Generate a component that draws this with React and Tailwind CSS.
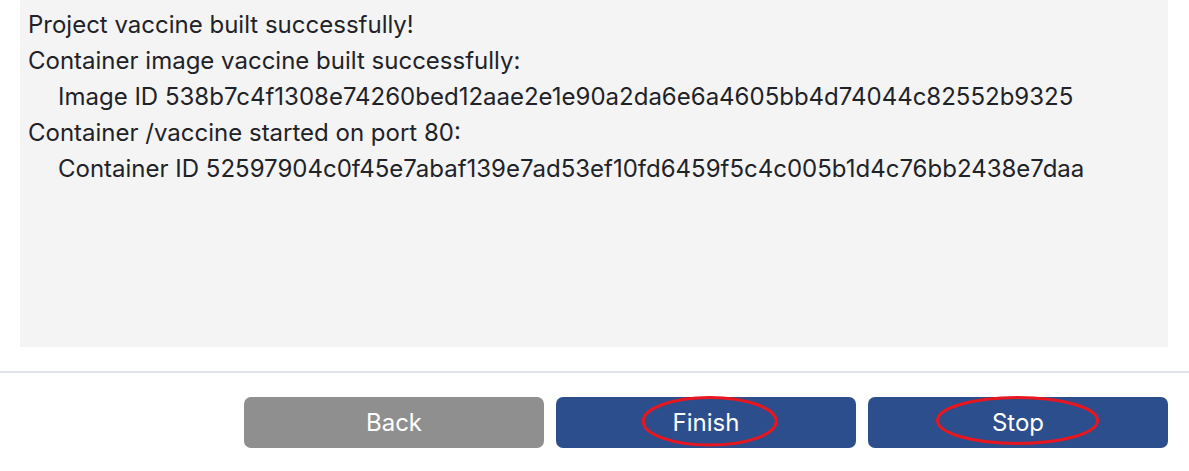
const lines = [
    { text: "Project vaccine built successfully!", indent: false },
    { text: "Container image vaccine built successfully:", indent: false },
    { text: "Image ID 538b7c4f1308e74260bed12aae2e1e90a2da6e6a4605bb4d74044c82552b9325", indent: true },
    { text: "Container /vaccine started on port 80:", indent: false },
    { text: "Container ID 52597904c0f45e7abaf139e7ad53ef10fd6459f5c4c005b1d4c76bb2438e7daa", indent: true },
];

const Ring = ({ cx, cy, rx, ry }) => (
    <svg className="absolute inset-0 w-full h-full overflow-visible pointer-events-none" viewBox="0 0 300 51">
        <ellipse cx={cx} cy={cy} rx={rx} ry={ry} fill="none" stroke="#e8161f" strokeWidth="3" />
    </svg>
);

const App = () => {
    return (
        <div className="w-full h-[471px] bg-white font-['Inter','Liberation_Sans',sans-serif]">
            <div className="ml-[20px] mr-[21px] h-[347px] bg-[#f4f4f4] pt-[7px] pl-[8px]">
                {lines.map((l, i) => (
                    <div key={i} className={`text-[24px] leading-[36px] text-[#1f2328] whitespace-nowrap ${l.indent ? "pl-[30px]" : ""}`}>
                        {l.text}
                    </div>
                ))}
            </div>

            <div className="mt-[24px] h-[2px] bg-[#dfe3e8]" />

            <div className="flex justify-end gap-3 pt-[24px] pr-[21px]">
                <button className="w-[300px] h-[51px] rounded-[7px] bg-[#8f8f8f] text-white text-[24px]">
                    Back
                </button>
                <button className="relative w-[300px] h-[51px] rounded-[7px] bg-[#2d4e8c] text-white text-[24px]">
                    Finish
                    <Ring cx={153.7} cy={24.3} rx={66.5} ry={23.8} />
                </button>
                <button className="relative w-[300px] h-[51px] rounded-[7px] bg-[#2d4e8c] text-white text-[24px]">
                    Stop
                    <Ring cx={149.5} cy={23.5} rx={80} ry={23} />
                </button>
            </div>
        </div>
    );
};

export default App;
